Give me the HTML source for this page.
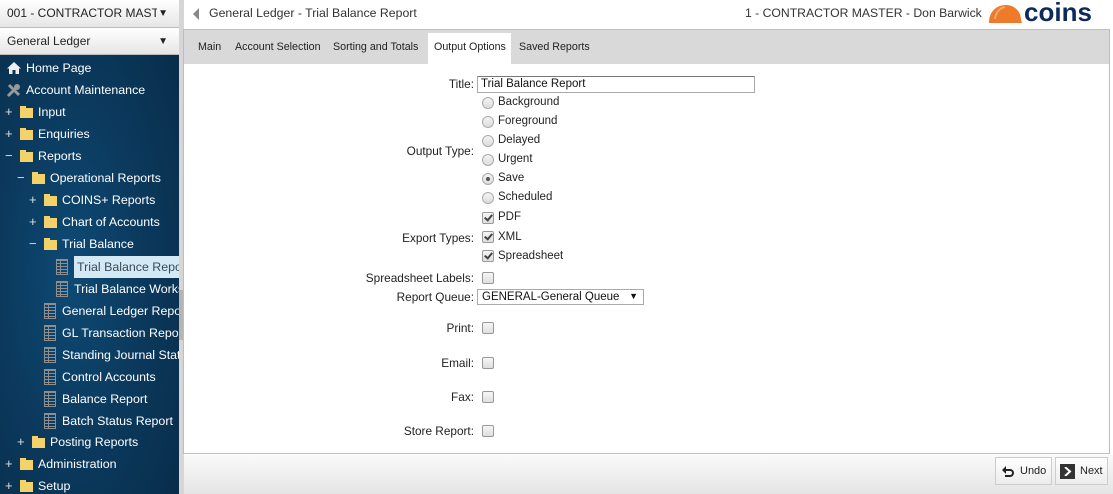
<!DOCTYPE html>
<html><head><style>
*{margin:0;padding:0;box-sizing:border-box}
body{width:1113px;height:494px;overflow:hidden;font-family:"Liberation Sans",Arial,sans-serif;background:#fff;position:relative}
.a{position:absolute;white-space:nowrap}
#side{position:absolute;left:0;top:0;width:179px;height:494px;background:radial-gradient(ellipse at 40% 55%,#0e4a74 0%,#0b3a5e 45%,#082a46 100%);overflow:hidden}
.hd{position:absolute;left:0;width:179px;background:linear-gradient(#fff,#e6e6e6);border-bottom:1px solid #bbb;font-size:12px;color:#222;padding-left:7px}
.hd span{display:block;width:150px;overflow:hidden;white-space:nowrap}
.hd b{position:absolute;right:11px;top:0;font-size:10px}
.it{position:absolute;font-size:12.4px;color:#fff;height:22px;line-height:22px;white-space:nowrap}
.pm{position:absolute;color:#ddd;font-size:13px;line-height:22px}
.fd{position:absolute;width:13px;height:10px;background:#f4d26a;top:7px}
.fd:before{content:"";position:absolute;left:0;top:-2px;width:6px;height:2px;background:#f4d26a}
.dc{position:absolute;width:12px;height:16px;top:3px;border:1.5px solid #8e8e8e;background:repeating-linear-gradient(#8e8e8e 0 1px,transparent 1px 3px),transparent}
.dc:after{content:"";position:absolute;left:3px;top:0;bottom:0;width:1px;background:#8e8e8e}
.lb{position:absolute;left:280px;width:194px;text-align:right;font-size:11.8px;color:#222}
.ol{position:absolute;left:498px;font-size:11.5px;color:#222}
.rd{position:absolute;left:482px;width:12px;height:12px;border-radius:50%;border:1px solid #aaa;background:linear-gradient(#f4f4f4,#dcdcdc)}
.cb{position:absolute;left:482px;width:12px;height:12px;border-radius:2px;border:1px solid #999;background:linear-gradient(#f6f6f6,#dedede)}
.cb.c:after{content:"";position:absolute;left:3px;top:0px;width:3px;height:6px;border:solid #444;border-width:0 2px 2px 0;transform:rotate(40deg)}
.btn{position:absolute;top:457px;height:28px;border:1px solid #ccc;background:linear-gradient(#fff,#ececec);font-size:11px;color:#222;line-height:26px}
.tb{position:absolute;top:41px;font-size:10.7px;color:#222}
</style></head><body>
<div id="side">
<div class="hd" style="top:0;height:28px;line-height:27px"><span>001 - CONTRACTOR MASTEI</span><b>▼</b></div>
<div class="hd" style="top:28px;height:27px;line-height:27px"><span>General Ledger</span><b>▼</b></div>
<svg class="a" style="left:6px;top:61px" width="16" height="14" viewBox="0 0 16 14"><path d="M8 1 L1 7.5 H3 V13 H6.5 V9 H9.5 V13 H13 V7.5 H15 Z" fill="#eee"/></svg>
<div class="it" style="left:26px;top:57px">Home Page</div>
<svg class="a" style="left:6px;top:83px" width="16" height="15" viewBox="0 0 16 15"><path d="M2 13 L10 5 M3 2 L13 12" stroke="#999" stroke-width="3"/><circle cx="11" cy="4" r="3" fill="#999"/></svg>
<div class="it" style="left:26px;top:79px">Account Maintenance</div>
<div class="pm" style="left:5px;top:101px">+</div><div class="fd" style="left:20px;top:108px"></div><div class="it" style="left:38px;top:101px">Input</div>
<div class="pm" style="left:5px;top:123px">+</div><div class="fd" style="left:20px;top:130px"></div><div class="it" style="left:38px;top:123px">Enquiries</div>
<div class="pm" style="left:5px;top:145px">−</div><div class="fd" style="left:20px;top:152px"></div><div class="it" style="left:38px;top:145px">Reports</div>
<div class="pm" style="left:17px;top:167px">−</div><div class="fd" style="left:32px;top:174px"></div><div class="it" style="left:50px;top:167px">Operational Reports</div>
<div class="pm" style="left:29px;top:189px">+</div><div class="fd" style="left:44px;top:196px"></div><div class="it" style="left:62px;top:189px">COINS+ Reports</div>
<div class="pm" style="left:29px;top:211px">+</div><div class="fd" style="left:44px;top:218px"></div><div class="it" style="left:62px;top:211px">Chart of Accounts</div>
<div class="pm" style="left:29px;top:233px">−</div><div class="fd" style="left:44px;top:240px"></div><div class="it" style="left:62px;top:233px">Trial Balance</div>
<div class="a" style="left:74px;top:256px;width:105px;height:22px;background:#d3e9f3"></div>
<div class="dc" style="left:56px;top:259px"></div><div class="it" style="left:77px;top:256px;color:#3a4a5a">Trial Balance Repo</div>
<div class="dc" style="left:56px;top:281px"></div><div class="it" style="left:74px;top:278px">Trial Balance Works</div>
<div class="dc" style="left:44px;top:303px"></div><div class="it" style="left:62px;top:300px">General Ledger Repo</div>
<div class="dc" style="left:44px;top:325px"></div><div class="it" style="left:62px;top:322px">GL Transaction Repor</div>
<div class="dc" style="left:44px;top:347px"></div><div class="it" style="left:62px;top:344px">Standing Journal Stat</div>
<div class="dc" style="left:44px;top:369px"></div><div class="it" style="left:62px;top:366px">Control Accounts</div>
<div class="dc" style="left:44px;top:391px"></div><div class="it" style="left:62px;top:388px">Balance Report</div>
<div class="dc" style="left:44px;top:413px"></div><div class="it" style="left:62px;top:410px">Batch Status Report</div>
<div class="pm" style="left:17px;top:431px">+</div><div class="fd" style="left:32px;top:438px"></div><div class="it" style="left:50px;top:431px">Posting Reports</div>
<div class="pm" style="left:5px;top:453px">+</div><div class="fd" style="left:20px;top:460px"></div><div class="it" style="left:38px;top:453px">Administration</div>
<div class="pm" style="left:5px;top:475px">+</div><div class="fd" style="left:20px;top:482px"></div><div class="it" style="left:38px;top:475px">Setup</div>
</div>
<div class="a" style="left:179px;top:0;width:5px;height:494px;background:#d6d6d6"></div>
<div class="a" style="left:179px;top:290px;width:5px;height:50px;background:#b5b5b5"></div>
<!-- header -->
<svg class="a" style="left:192px;top:8px" width="8" height="12"><path d="M7 0 L1 6 L7 12Z" fill="#888"/></svg>
<div class="a" style="left:209px;top:6px;font-size:12.3px;color:#333">General Ledger - Trial Balance Report</div>
<div class="a" style="left:745px;top:6px;font-size:12.2px;color:#333">1 - CONTRACTOR MASTER - Don Barwick</div>
<svg class="a" style="left:987px;top:3px" width="36" height="22" viewBox="0 0 36 22"><path d="M2 20 C2 8 10 2 19 2 C28 2 34 9 34 17 L35 20 Z" fill="#ee7a2a"/><path d="M8 16 C9 9 13 5 18 4" stroke="#f6a86a" stroke-width="2" fill="none"/></svg>
<div class="a" style="left:1024px;top:-3px;font-size:26px;font-weight:bold;color:#0d2a5c">coins</div>
<!-- frame -->
<div class="a" style="left:183px;top:29px;width:927px;height:425px;border:1px solid #bdbdbd;background:#fff"></div>
<div class="a" style="left:184px;top:30px;width:925px;height:34px;background:#d9d9d9"></div>
<div class="a" style="left:428px;top:33px;width:83px;height:31px;background:#fff"></div>
<div class="tb" style="left:198px">Main</div>
<div class="tb" style="left:235px">Account Selection</div>
<div class="tb" style="left:333px">Sorting and Totals</div>
<div class="tb" style="left:434px">Output Options</div>
<div class="tb" style="left:519px">Saved Reports</div>
<!-- form -->
<div class="lb" style="top:77px">Title:</div>
<div class="a" style="left:477px;top:76px;width:278px;height:17px;border:1px solid #aaa;border-top-color:#777;font-size:11.5px;padding:1px 3px;color:#111">Trial Balance Report</div>
<div class="rd" style="top:97px"></div><div class="ol" style="top:96px">Background</div>
<div class="rd" style="top:116px"></div><div class="ol" style="top:115px">Foreground</div>
<div class="rd" style="top:135px"></div><div class="ol" style="top:134px">Delayed</div>
<div class="lb" style="top:144px">Output Type:</div>
<div class="rd" style="top:154px"></div><div class="ol" style="top:153px">Urgent</div>
<div class="rd" style="top:173px"></div><div class="a" style="left:486px;top:177px;width:4px;height:4px;border-radius:50%;background:#555"></div><div class="ol" style="top:172px">Save</div>
<div class="rd" style="top:192px"></div><div class="ol" style="top:191px">Scheduled</div>
<div class="cb c" style="top:212px"></div><div class="ol" style="top:211px">PDF</div>
<div class="lb" style="top:231px">Export Types:</div>
<div class="cb c" style="top:231px"></div><div class="ol" style="top:231px">XML</div>
<div class="cb c" style="top:250px"></div><div class="ol" style="top:250px">Spreadsheet</div>
<div class="lb" style="top:271px">Spreadsheet Labels:</div><div class="cb" style="top:272px"></div>
<div class="lb" style="top:290px">Report Queue:</div>
<div class="a" style="left:477px;top:289px;width:167px;height:16px;border:1px solid #aaa;font-size:11.5px;padding:1px 4px;color:#111">GENERAL-General Queue<span style="position:absolute;right:5px;top:1px;font-size:9px">▼</span></div>
<div class="lb" style="top:321px">Print:</div><div class="cb" style="top:322px"></div>
<div class="lb" style="top:356px">Email:</div><div class="cb" style="top:357px"></div>
<div class="lb" style="top:390px">Fax:</div><div class="cb" style="top:391px"></div>
<div class="lb" style="top:424px">Store Report:</div><div class="cb" style="top:425px"></div>
<!-- footer -->
<div class="a" style="left:184px;top:455px;width:929px;height:39px;background:linear-gradient(#fafafa,#e4e4e4)"></div>
<div class="btn" style="left:995px;width:57px"><svg class="a" style="left:6px;top:7px" width="13" height="13" viewBox="0 0 13 13"><path d="M3 5 H8 A3 3 0 0 1 8 11 H3" stroke="#222" stroke-width="2" fill="none"/><path d="M0 5 L4 1 V9Z" fill="#222"/></svg><span style="position:absolute;left:24px">Undo</span></div>
<div class="btn" style="left:1055px;width:53px"><span class="a" style="left:4px;top:6px;width:15px;height:15px;background:#333"></span><svg class="a" style="left:8px;top:9px" width="8" height="9"><path d="M1 0 L6 4.5 L1 9" stroke="#fff" stroke-width="2" fill="none"/></svg><span style="position:absolute;left:24px">Next</span></div>
</body></html>
